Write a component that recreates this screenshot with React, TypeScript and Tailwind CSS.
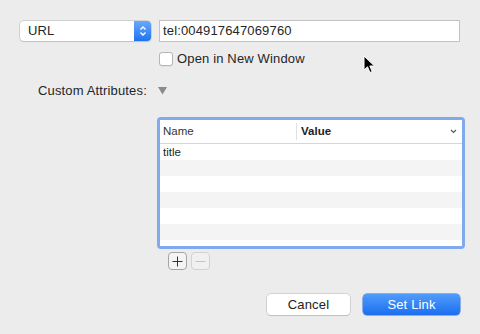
import React from 'react'

const rows = ['title', '', '', '', '', '', '']

export default function App() {
  return (
    <div
      className="relative w-[480px] h-[334px] overflow-hidden bg-[#ececec] text-[#262626] text-[13px] leading-[15px] tracking-[0.15px]"
      style={{ fontFamily: '"Liberation Sans", Arial, sans-serif' }}
    >
      <div className="flex items-center pt-[20px] pl-[20px] gap-[8px]">
        {/* popup */}
        <div className="flex h-[20px] w-[131px] rounded-[4px] bg-white shadow-[0_0_0_0.5px_#b8b8b8,0_1px_1px_rgba(0,0,0,0.15)]">
          <span className="flex-1 pl-[8px] leading-[20px]">URL</span>
          <div className="flex w-[17px] flex-col items-center justify-center rounded-r-[4px] bg-gradient-to-b from-[#69a8fb] to-[#1c73f0]">
            <svg width="8" height="12" viewBox="0 0 8 12" fill="none" stroke="white" strokeWidth="1.4">
              <path d="M1.5 4.5 L4 2 L6.5 4.5" />
              <path d="M1.5 7.5 L4 10 L6.5 7.5" />
            </svg>
          </div>
        </div>
        {/* text field */}
        <div className="h-[22px] w-[301px] border border-[#c3c3c3] bg-white pl-[3px] leading-[20px]">
          tel:004917647069760
        </div>
      </div>

      <label className="mt-[9px] ml-[159px] flex items-center gap-[4px]">
        <span className="h-[14px] w-[14px] rounded-[3px] border border-[#b5b5b5] bg-white shadow-[0_0.5px_0.5px_rgba(0,0,0,0.08)]" />
        <span>Open in New Window</span>
      </label>

      <div className="mt-[17px] ml-[38px] flex items-center gap-[11px]">
        <span>Custom Attributes:</span>
        <svg width="9" height="8" viewBox="0 0 9 8">
          <path d="M0 0 L9 0 L4.5 7.5 Z" fill="#8a8a8a" />
        </svg>
      </div>

      {/* table */}
      <div className="mt-[19px] ml-[157px] h-[132px] w-[308px] rounded-[4px] bg-[#80a9ef] p-[3px]">
        <div className="h-full w-full overflow-hidden bg-white text-[11.5px] tracking-normal">
          <div className="flex h-[24px] items-center border-b border-[#d6d6d6]">
            <span className="w-[136px] pl-[3px] text-[#333]">Name</span>
            <span className="h-[17px] w-px bg-[#e0e0e0]" />
            <span className="flex-1 pl-[4px] font-bold text-[#222]">Value</span>
            <svg className="mr-[5px]" width="7" height="5" viewBox="0 0 7 5" fill="none" stroke="#555" strokeWidth="1.1">
              <path d="M1 1 L3.5 3.5 L6 1" />
            </svg>
          </div>
          {rows.map((r, i) => (
            <div key={i} className={`h-[16px] pl-[3px] leading-[16px] ${i % 2 === 1 ? 'bg-[#f4f4f4]' : 'bg-white'}`}>
              {r}
            </div>
          ))}
        </div>
      </div>

      <div className="mt-[3px] ml-[168px] flex gap-[4px]">
        <div className="flex h-[18px] w-[19px] items-center justify-center rounded-[4px] border border-[#a5a5a5] bg-[#f4f4f4]">
          <svg width="11" height="11" viewBox="0 0 11 11" stroke="#333" strokeWidth="1">
            <path d="M5.5 0.5 V10.5 M0.5 5.5 H10.5" />
          </svg>
        </div>
        <div className="flex h-[18px] w-[19px] items-center justify-center rounded-[4px] border border-[#d2d2d2] bg-[#f0f0f0]">
          <svg width="11" height="11" viewBox="0 0 11 11" stroke="#c4c4c4" strokeWidth="1">
            <path d="M0.5 5.5 H10.5" />
          </svg>
        </div>
      </div>

      <div className="mt-[24px] ml-[267px] flex gap-[13px]">
        <button className="h-[21px] w-[83px] rounded-[4px] bg-white text-[13px] text-[#222] shadow-[0_0_0_0.5px_#b8b8b8,0_1px_1px_rgba(0,0,0,0.15)]">
          Cancel
        </button>
        <button className="h-[21px] w-[97px] rounded-[4px] bg-gradient-to-b from-[#4f9bfb] to-[#1a6ef0] text-[13px] text-white shadow-[0_0_0_0.5px_#2a6ed8]">
          Set Link
        </button>
      </div>

      {/* mouse cursor */}
      <svg className="absolute left-[363px] top-[55px]" width="13" height="19" viewBox="0 0 13 19">
        <path d="M1 1 L1 15 L4.5 11.8 L7 17.5 L9.2 16.5 L6.8 11 L11.5 11 Z" fill="#000" stroke="#fff" strokeWidth="1" />
      </svg>
    </div>
  )
}
